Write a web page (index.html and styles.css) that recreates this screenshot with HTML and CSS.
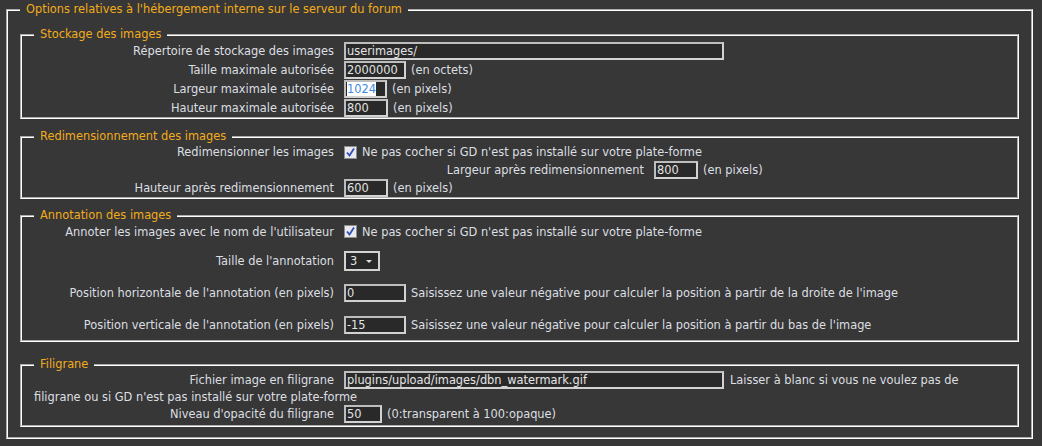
FILE: index.html
```html
<!DOCTYPE html>
<html lang="fr">
<head>
<meta charset="utf-8">
<title>Options</title>
<link rel="stylesheet" href="styles.css">
</head>
<body>
<div class="page">
  <fieldset class="box outer">
    <legend>Options relatives à l'hébergement interne sur le serveur du forum</legend>

    <fieldset class="box group g1">
      <legend>Stockage des images</legend>
      <div class="row r19"><span class="label">Répertoire de stockage des images</span><span class="field w380">userimages/</span></div>
      <div class="row r19"><span class="label">Taille maximale autorisée</span><span class="field w62">2000000</span><span class="note">(en octets)</span></div>
      <div class="row r19"><span class="label">Largeur maximale autorisée</span><span class="field w43"><span class="sel">1024</span></span><span class="note">(en pixels)</span></div>
      <div class="row r19"><span class="label">Hauteur maximale autorisée</span><span class="field w44">800</span><span class="note">(en pixels)</span></div>
    </fieldset>

    <fieldset class="box group g2">
      <legend>Redimensionnement des images</legend>
      <div class="row r18"><span class="label">Redimensionner les images</span><span class="check"><svg width="11" height="11" viewBox="0 0 11 11"><path d="M2 5.5 L4.5 8.5 L9 1.5" fill="none" stroke="#2f4fb8" stroke-width="1.8"/></svg></span><span class="text">Ne pas cocher si GD n'est pas installé sur votre plate-forme</span></div>
      <div class="row r18 sub"><span class="label">Largeur après redimensionnement</span><span class="field w44">800</span><span class="note">(en pixels)</span></div>
      <div class="row r18"><span class="label">Hauteur après redimensionnement</span><span class="field w44">600</span><span class="note">(en pixels)</span></div>
    </fieldset>

    <fieldset class="box group g3">
      <legend>Annotation des images</legend>
      <div class="row r19"><span class="label">Annoter les images avec le nom de l'utilisateur</span><span class="check"><svg width="11" height="11" viewBox="0 0 11 11"><path d="M2 5.5 L4.5 8.5 L9 1.5" fill="none" stroke="#2f4fb8" stroke-width="1.8"/></svg></span><span class="text">Ne pas cocher si GD n'est pas installé sur votre plate-forme</span></div>
      <div class="row r19 gap10"><span class="label">Taille de l'annotation</span><span class="select">3<span class="arrow"></span></span></div>
      <div class="row r19 gap13"><span class="label">Position horizontale de l'annotation (en pixels)</span><span class="field w62">0</span><span class="text">Saisissez une valeur négative pour calculer la position à partir de la droite de l'image</span></div>
      <div class="row r19 gap13"><span class="label">Position verticale de l'annotation (en pixels)</span><span class="field w62">-15</span><span class="text">Saisissez une valeur négative pour calculer la position à partir du bas de l'image</span></div>
    </fieldset>

    <fieldset class="box group g4">
      <legend>Filigrane</legend>
      <div class="flow"><span class="label">Fichier image en filigrane</span><span class="field w380">plugins/upload/images/dbn_watermark.gif</span><span class="text">Laisser à blanc si vous ne voulez pas de</span><br>filigrane ou si GD n'est pas installé sur votre plate-forme</div>
      <div class="flow"><span class="label">Niveau d'opacité du filigrane</span><span class="field w38">50</span><span class="note">(0:transparent à 100:opaque)</span></div>
    </fieldset>
  </fieldset>
</div>
</body>
</html>
```

FILE: styles.css
```css
html, body {
  margin: 0;
  padding: 0;
  background: #373737;
}
body {
  font-family: "DejaVu Sans", sans-serif;
  font-size: 11.4px;
  color: #dcdfe2;
}
.page {
  padding: 3px 9px 0 6px;
}
.box {
  margin: 0;
  border: 2px groove #ffffff;
  min-width: 0;
}
.box > legend {
  color: #f2ac1c;
  padding: 0 6px;
  line-height: 13px;
  margin: 0;
}
.outer {
  padding: 0 12px 10px 12px;
}
.outer > legend {
  margin-bottom: 12px;
}
.group {
  padding: 0 12px 0 12px;
}
.g2 { margin-top: 11px; }
.g3 { margin-top: 10px; padding-bottom: 6px; }
.g4 { margin-top: 16px; padding-bottom: 1px; }

.row {
  display: flex;
  align-items: center;
  white-space: nowrap;
}
.r19 { height: 19px; }
.r18 { height: 18px; }
.gap10 { margin-top: 10px; }
.gap13 { margin-top: 13px; }
.sub { padding-left: 310px; }

.label {
  display: inline-block;
  width: 300px;
  text-align: right;
  margin-right: 10px;
  flex: none;
}
.field {
  display: inline-block;
  box-sizing: border-box;
  height: 18px;
  line-height: 14px;
  border: 2px solid #d2d2d2;
  border-top-color: #bdbdbd;
  border-left-color: #bdbdbd;
  background: #292929;
  color: #e4e4e4;
  padding-left: 1px;
  vertical-align: middle;
  flex: none;
  overflow: hidden;
}
.w380 { width: 380px; }
.w62 { width: 62px; }
.w44 { width: 44px; }
.w43 { width: 43px; }
.w38 { width: 38px; }
.sel {
  background: #ffffff;
  color: #3b8ce8;
}
.note {
  margin-left: 5px;
}
.text {
  margin-left: 5px;
}
.check {
  display: inline-flex;
  align-items: center;
  justify-content: center;
  box-sizing: border-box;
  width: 13px;
  height: 13px;
  border: 1px solid #8d8d8d;
  background: #e9e9ee;
  flex: none;
}
.check svg { display: block; }
.select {
  position: relative;
  display: inline-block;
  box-sizing: border-box;
  width: 36px;
  height: 20px;
  line-height: 16px;
  border: 2px solid #d2d2d2;
  background: #292929;
  color: #e4e4e4;
  padding-left: 4px;
  flex: none;
}
.arrow {
  position: absolute;
  right: 6px;
  top: 7px;
  width: 0;
  height: 0;
  border-left: 3px solid transparent;
  border-right: 3px solid transparent;
  border-top: 3px solid #e0e0e0;
}
.flow {
  line-height: 15px;
}
.flow .label {
  vertical-align: middle;
}
.flow .field {
  margin: 0 0 1px 0;
}
.flow .text {
  margin-left: 6px;
}
```
